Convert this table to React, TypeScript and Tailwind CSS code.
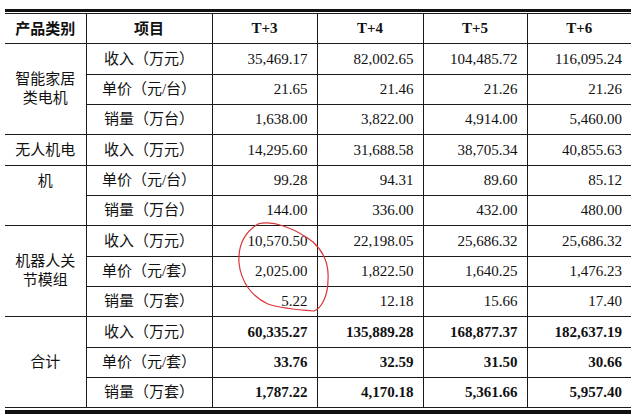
const serif = "font-['Liberation_Serif','Noto_Sans_CJK_SC',serif]";

type Row = { label: string; values: string[] };

const smartHome: Row[] = [
  { label: "收入（万元）", values: ["35,469.17", "82,002.65", "104,485.72", "116,095.24"] },
  { label: "单价（元/台）", values: ["21.65", "21.46", "21.26", "21.26"] },
  { label: "销量（万台）", values: ["1,638.00", "3,822.00", "4,914.00", "5,460.00"] },
];

const drone: Row[] = [
  { label: "收入（万元）", values: ["14,295.60", "31,688.58", "38,705.34", "40,855.63"] },
  { label: "单价（元/台）", values: ["99.28", "94.31", "89.60", "85.12"] },
  { label: "销量（万台）", values: ["144.00", "336.00", "432.00", "480.00"] },
];

const joint: Row[] = [
  { label: "收入（万元）", values: ["10,570.50", "22,198.05", "25,686.32", "25,686.32"] },
  { label: "单价（元/套）", values: ["2,025.00", "1,822.50", "1,640.25", "1,476.23"] },
  { label: "销量（万套）", values: ["5.22", "12.18", "15.66", "17.40"] },
];

const total: Row[] = [
  { label: "收入（万元）", values: ["60,335.27", "135,889.28", "168,877.37", "182,637.19"] },
  { label: "单价（元/套）", values: ["33.76", "32.59", "31.50", "30.66"] },
  { label: "销量（万套）", values: ["1,787.22", "4,170.18", "5,361.66", "5,957.40"] },
];

const cell = "border border-[#1a1a1a] first:border-l-0 last:border-r-0";

// first row of each group is 1px taller, like the scan
const rowH = (i: number) => (i === 0 ? "h-[31px]" : "h-[30px]");

function Cells({ row, bold }: { row: Row; bold?: boolean }) {
  return (
    <>
      <td className={`${cell} text-center`}>{row.label}</td>
      {row.values.map((v, i) => (
        <td key={i} className={`${cell} text-right pr-[9px] ${bold ? "font-bold" : ""}`}>
          {v}
        </td>
      ))}
    </>
  );
}

function Group({ name, rows, bold }: { name: string; rows: Row[]; bold?: boolean }) {
  return (
    <>
      {rows.map((row, i) => (
        <tr key={i} className={rowH(i)}>
          {i === 0 && (
            <td rowSpan={rows.length} className={`${cell} text-center px-[10px] leading-[19px]`}>
              {name}
            </td>
          )}
          <Cells row={row} bold={bold} />
        </tr>
      ))}
    </>
  );
}

export default function App() {
  return (
    <div className={`relative w-[640px] h-[417px] bg-white text-[#111] text-[15px] ${serif}`}>
      <div className="pt-[9px] pl-[5px] w-[631px]">
        <div className="h-[3px] bg-[#111]" />
        <div className="h-[1px]" />
        <table className="w-[626px] table-fixed border-collapse">
          <colgroup>
            <col className="w-[81px]" />
            <col className="w-[126px]" />
            <col className="w-[105px]" />
            <col className="w-[106px]" />
            <col className="w-[104px]" />
            <col className="w-[104px]" />
          </colgroup>
          <thead>
            <tr className="h-[30px] font-bold">
              <th className={`${cell} font-['Noto_Sans_CJK_SC',sans-serif]`}>产品类别</th>
              <th className={`${cell} font-['Noto_Sans_CJK_SC',sans-serif]`}>项目</th>
              <th className={cell}>T+3</th>
              <th className={cell}>T+4</th>
              <th className={cell}>T+5</th>
              <th className={cell}>T+6</th>
            </tr>
          </thead>
          <tbody>
            <Group name="智能家居类电机" rows={smartHome} />
            {drone.map((row, i) => (
              <tr key={i} className={rowH(i)}>
                {i === 0 && <td className={`${cell} text-center`}>无人机电</td>}
                {i === 1 && (
                  <td rowSpan={2} className={`${cell} text-center align-top pt-[4px]`}>
                    机
                  </td>
                )}
                <Cells row={row} />
              </tr>
            ))}
            <Group name="机器人关节模组" rows={joint} />
            <Group name="合计" rows={total} bold />
          </tbody>
        </table>
        <div className="h-[2px]" />
        <div className="h-[4px] bg-[#111]" />
      </div>

      <svg className="pointer-events-none absolute left-0 top-0" width="640" height="417">
        <path
          d="M 258 224 C 272 220, 295 228, 313 242 C 324 252, 329 266, 328 280 C 328 295, 322 308, 314 311 C 300 310, 280 308, 268 304 C 252 297, 241 282, 239 263 C 238 248, 242 234, 258 224"
          fill="none"
          stroke="#d8343a"
          strokeWidth="1.2"
          strokeLinecap="round"
        />
      </svg>
    </div>
  );
}
